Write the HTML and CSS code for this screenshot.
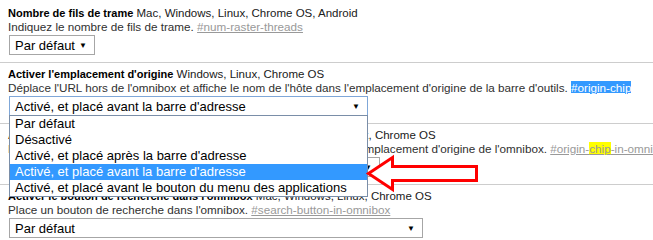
FILE: index.html
```html
<!DOCTYPE html>
<html lang="fr">
<head>
<meta charset="utf-8">
<title>Flags</title>
<link rel="stylesheet" href="styles.css">
</head>
<body>
<div class="page">
  <section class="exp">
    <div class="title"><b>Nombre de fils de trame</b> Mac, Windows, Linux, Chrome OS, Android</div>
    <div class="desc">Indiquez le nombre de fils de trame. <a class="perm">#num-raster-threads</a></div>
    <div class="select w1"><span>Par défaut</span><span class="arr">▼</span></div>
  </section>
  <section class="exp">
    <div class="title"><b>Activer l'emplacement d'origine</b> Windows, Linux, Chrome OS</div>
    <div class="desc">Déplace l'URL hors de l'omnibox et affiche le nom de l'hôte dans l'emplacement d'origine de la barre d'outils. <a class="perm sel">#origin-chip</a></div>
    <div class="select focus w2"><span>Activé, et placé avant la barre d'adresse</span><span class="arr">▼</span></div>
  </section>
  <section class="exp">
    <div class="title"><b>Activer l'emplacement d'origine dans l'omnibox</b> Mac, Windows, Linux, Chrome OS</div>
    <div class="desc">Déplace l'URL hors de l'omnibox et y affiche le nom de l'hôte dans l'emplacement d'origine de l'omnibox. <a class="perm">#origin-<mark>chip</mark>-in-omnibox</a></div>
    <div class="select w3"><span>Par défaut</span><span class="arr">▼</span></div>
  </section>
  <section class="exp last">
    <div class="title"><b>Activer le bouton de recherche dans l'omnibox</b> Mac, Windows, Linux, Chrome OS</div>
    <div class="desc">Place un bouton de recherche dans l'omnibox. <a class="perm">#search-button-in-omnibox</a></div>
    <div class="select w4"><span>Par défaut</span><span class="arr">▼</span></div>
  </section>
</div>
<ul class="dropdown">
  <li>Par défaut</li>
  <li>Désactivé</li>
  <li>Activé, et placé après la barre d'adresse</li>
  <li class="hl">Activé, et placé avant la barre d'adresse</li>
  <li>Activé, et placé avant le bouton du menu des applications</li>
</ul>
<svg class="pointer" width="653" height="240" viewBox="0 0 653 240">
  <polygon points="368.5,173.5 392.5,157.5 392.5,166.5 476.5,166.5 476.5,180.5 392.5,180.5 392.5,189.5" fill="#fff" stroke="#ff0000" stroke-width="3" stroke-linejoin="miter"/>
</svg>
</body>
</html>
```
FILE: styles.css
```css
* { box-sizing: border-box; }
html, body { margin: 0; padding: 0; }
body {
  position: relative;
  width: 653px;
  height: 240px;
  overflow: hidden;
  background: #fff;
  font-family: "Liberation Sans", Arial, sans-serif;
  font-size: 12px;
  color: #303030;
}
.page { padding-top: 2px; }
.exp {
  padding: 4px 0 7px 8px;
  border-bottom: 1px solid #cdcdcd;
}
.exp.last { border-bottom: none; }
.title, .desc { line-height: 14px; white-space: nowrap; }
.title { font-size: 11.5px; color: #202020; }
.title b { color: #000; font-size: 11px; }
.desc { font-size: 11.7px; }
.perm { color: #999; text-decoration: underline; }
.perm.sel { background: #3399ff; color: #fff; }
mark { background: #ffff00; color: inherit; }
.select {
  margin-top: 1px;
  margin-left: 1px;
  height: 20px;
  border: 1px solid #a6a6a6;
  background: #fff;
  display: flex;
  align-items: center;
  justify-content: space-between;
  padding: 0 7px 0 5px;
  font-size: 13px;
  color: #000;
  white-space: nowrap;
}
.select.focus { border-color: #7fa7d8; }
.arr { font-size: 8px; }
.w1 { width: 86px; }
.w2 { width: 359px; }
.w3 { width: 371px; }
.w4 { width: 414px; }
.dropdown {
  position: absolute;
  left: 9px;
  top: 115px;
  width: 359px;
  margin: 0;
  padding: 0;
  list-style: none;
  background: #fff;
  border: 1px solid #7a8ea8;
  font-size: 13px;
  color: #000;
}
.dropdown li {
  height: 16px;
  line-height: 16px;
  padding-left: 5px;
  white-space: nowrap;
}
.dropdown li.hl { background: #3399ff; color: #fff; }
.pointer { position: absolute; left: 0; top: 0; pointer-events: none; }
```
